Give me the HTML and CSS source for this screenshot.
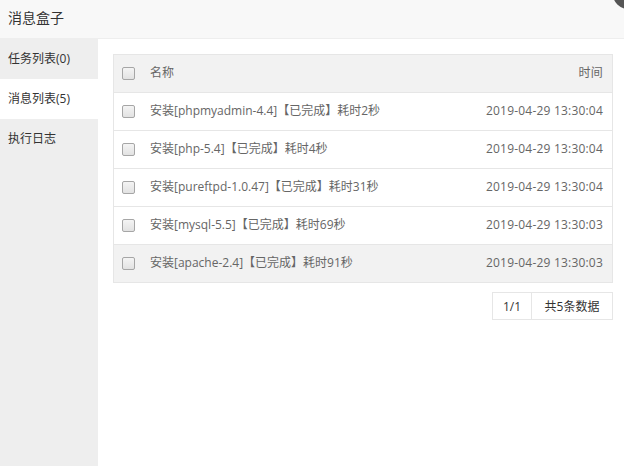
FILE: index.html
```html
<!DOCTYPE html>
<html lang="zh-CN">
<head>
<meta charset="utf-8">
<title>消息盒子</title>
<link rel="stylesheet" href="styles.css">
</head>
<body>
<div class="layer">
  <div class="layer-title">消息盒子</div>
  <span class="layer-close" aria-label="关闭"></span>
  <div class="layer-body">
    <ul class="tabs">
      <li class="tab">任务列表(0)</li>
      <li class="tab active">消息列表(5)</li>
      <li class="tab">执行日志</li>
    </ul>
    <div class="content">
      <div class="table">
        <div class="row head">
          <span class="cell-check"><i class="cb"></i></span>
          <span class="cell-name">名称</span>
          <span class="cell-time">时间</span>
        </div>
        <div class="row">
          <span class="cell-check"><i class="cb"></i></span>
          <span class="cell-name">安装[phpmyadmin-4.4]【已完成】耗时2秒</span>
          <span class="cell-time">2019-04-29 13:30:04</span>
        </div>
        <div class="row">
          <span class="cell-check"><i class="cb"></i></span>
          <span class="cell-name">安装[php-5.4]【已完成】耗时4秒</span>
          <span class="cell-time">2019-04-29 13:30:04</span>
        </div>
        <div class="row">
          <span class="cell-check"><i class="cb"></i></span>
          <span class="cell-name">安装[pureftpd-1.0.47]【已完成】耗时31秒</span>
          <span class="cell-time">2019-04-29 13:30:04</span>
        </div>
        <div class="row">
          <span class="cell-check"><i class="cb"></i></span>
          <span class="cell-name">安装[mysql-5.5]【已完成】耗时69秒</span>
          <span class="cell-time">2019-04-29 13:30:03</span>
        </div>
        <div class="row hover">
          <span class="cell-check"><i class="cb"></i></span>
          <span class="cell-name">安装[apache-2.4]【已完成】耗时91秒</span>
          <span class="cell-time">2019-04-29 13:30:03</span>
        </div>
      </div>
      <div class="pager">
        <span class="page-cur">1/1</span>
        <span class="page-total">共5条数据</span>
      </div>
    </div>
  </div>
</div>
</body>
</html>
```
FILE: styles.css
```css
* { box-sizing: border-box; }
html, body {
  margin: 0;
  padding: 0;
  height: 100%;
  background: #fff;
  overflow: hidden;
}
body {
  font-family: "Open Sans", "Noto Sans CJK SC", sans-serif;
  font-size: 12px;
  color: #666;
}
.layer {
  position: relative;
  display: flex;
  flex-direction: column;
  height: 466px;
}
.layer-title {
  height: 39px;
  line-height: 36px;
  padding-left: 8px;
  font-size: 14px;
  color: #333;
  background: #f8f8f8;
  border-bottom: 1px solid #eee;
}
.layer-close {
  position: absolute;
  left: 613px;
  top: -21px;
  width: 30px;
  height: 30px;
  border-radius: 50%;
  background: #555;
}
.layer-body {
  flex: 1;
  display: flex;
}
.tabs {
  list-style: none;
  margin: 0;
  padding: 0;
  width: 98px;
  background: #eee;
}
.tab {
  height: 40px;
  line-height: 40px;
  padding-left: 8px;
  color: #333;
}
.tab.active {
  background: #fff;
}
.content {
  flex: 1;
  padding: 15px 11px 0 15px;
  display: flex;
  flex-direction: column;
  align-items: flex-end;
}
.table {
  width: 100%;
  border: 1px solid #e6e6e6;
}
.row {
  display: flex;
  align-items: center;
  height: 38px;
  border-top: 1px solid #e6e6e6;
  color: #666;
}
.row.head {
  height: 37px;
  border-top: 0;
  background: #f2f2f2;
}
.row.hover {
  background: #f2f2f2;
}
.cell-check {
  width: 36px;
  padding-left: 8px;
  display: flex;
  align-items: center;
}
.cb {
  display: block;
  width: 13px;
  height: 13px;
  border: 1px solid #a6a6a6;
  border-radius: 2px;
  background: linear-gradient(#f4f4f4, #e2e2e2);
}
.cell-name {
  flex: 1;
  padding-bottom: 3px;
}
.cell-time {
  padding-right: 9px;
  padding-bottom: 3px;
  text-align: right;
  letter-spacing: 0.2px;
}
.pager {
  margin-top: 9px;
  display: flex;
  height: 28px;
  border: 1px solid #e6e6e6;
  color: #333;
}
.pager span {
  display: flex;
  align-items: center;
  justify-content: center;
}
.page-cur {
  width: 39px;
  border-right: 1px solid #e6e6e6;
}
.page-total {
  width: 80px;
}
```
